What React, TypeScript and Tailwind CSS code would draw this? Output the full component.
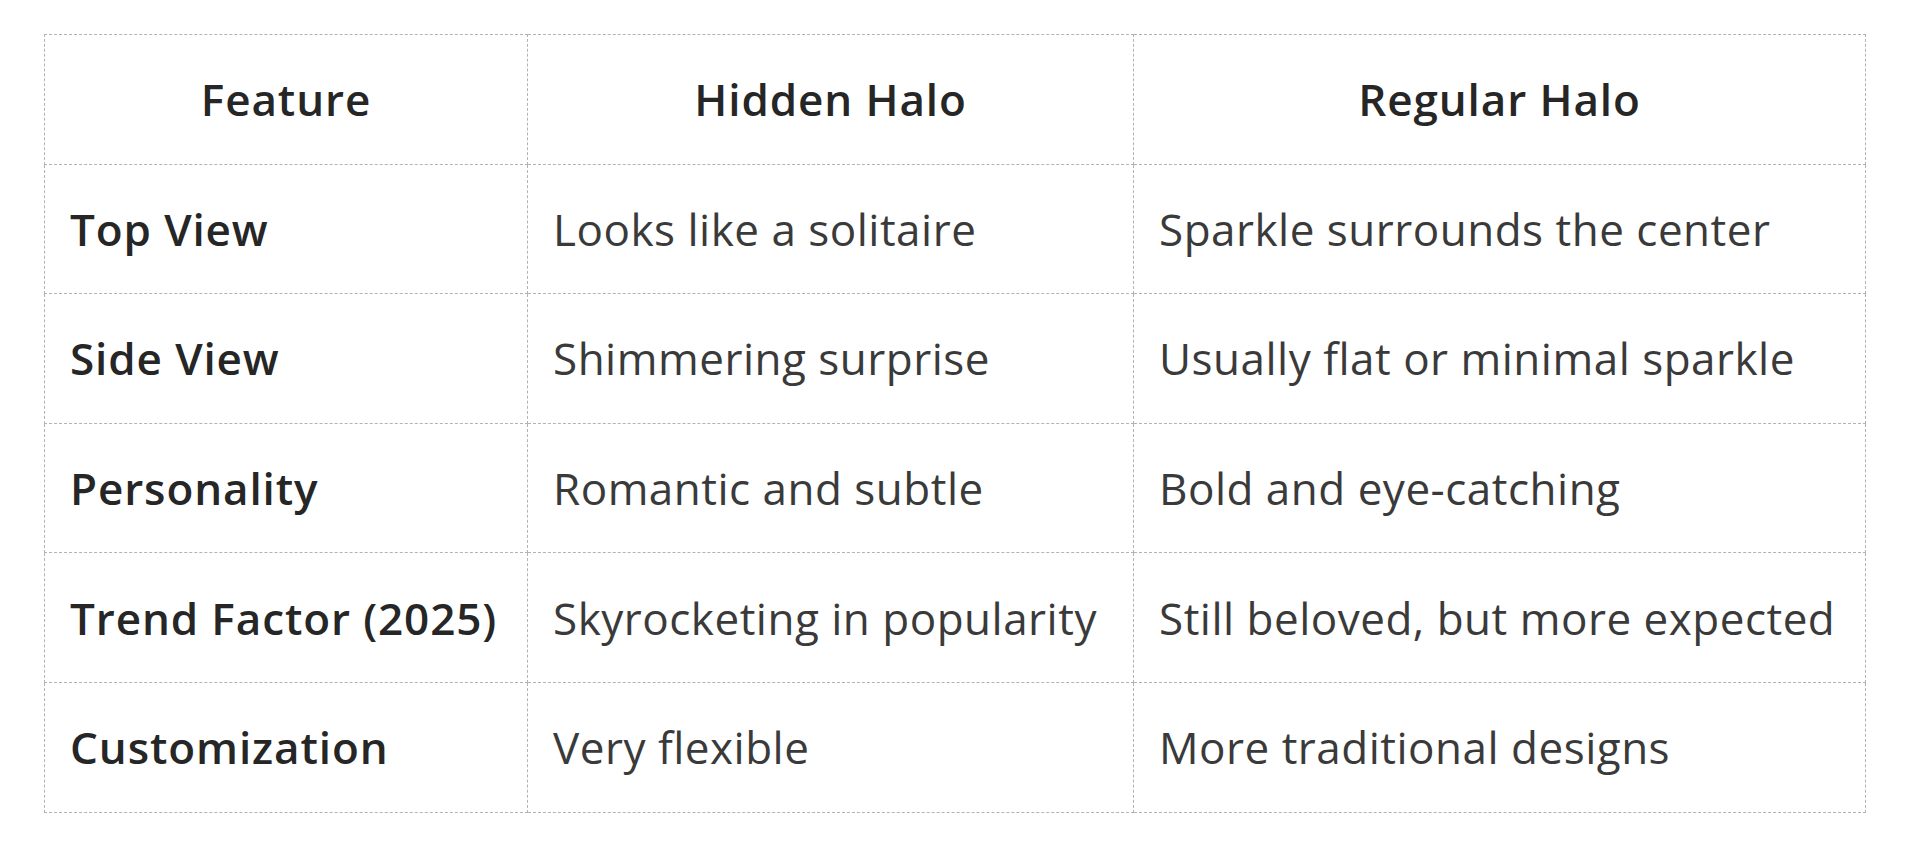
const HEADERS = ['Feature', 'Hidden Halo', 'Regular Halo'];

const ROWS: [string, string, string][] = [
  ['Top View', 'Looks like a solitaire', 'Sparkle surrounds the center'],
  ['Side View', 'Shimmering surprise', 'Usually flat or minimal sparkle'],
  ['Personality', 'Romantic and subtle', 'Bold and eye-catching'],
  ['Trend Factor (2025)', 'Skyrocketing in popularity', 'Still beloved, but more expected'],
  ['Customization', 'Very flexible', 'More traditional designs'],
];

const cell = 'border border-dashed border-[#b3b3b3] h-[129.6px] px-[25px] align-middle';
const strong = 'font-semibold text-[#262626] tracking-[0.9px]';
const plain = 'font-normal text-[#3a3a3a] tracking-[0.5px] whitespace-nowrap';

export default function App() {
  return (
    <div className="min-h-screen bg-white pt-[34px] pl-[44px] font-['Open_Sans','Noto_Sans',sans-serif] text-[44px] leading-none">
      <table className="table-fixed border-collapse w-[1821px]">
        <colgroup>
          <col className="w-[483px]" />
          <col className="w-[606px]" />
          <col className="w-[732px]" />
        </colgroup>
        <thead>
          <tr>
            {HEADERS.map((h) => (
              <th key={h} className={`${cell} ${strong} text-center`}>
                {h}
              </th>
            ))}
          </tr>
        </thead>
        <tbody>
          {ROWS.map(([feature, hidden, regular]) => (
            <tr key={feature}>
              <td className={`${cell} ${strong} whitespace-nowrap`}>{feature}</td>
              <td className={`${cell} ${plain}`}>{hidden}</td>
              <td className={`${cell} ${plain}`}>{regular}</td>
            </tr>
          ))}
        </tbody>
      </table>
    </div>
  );
}
